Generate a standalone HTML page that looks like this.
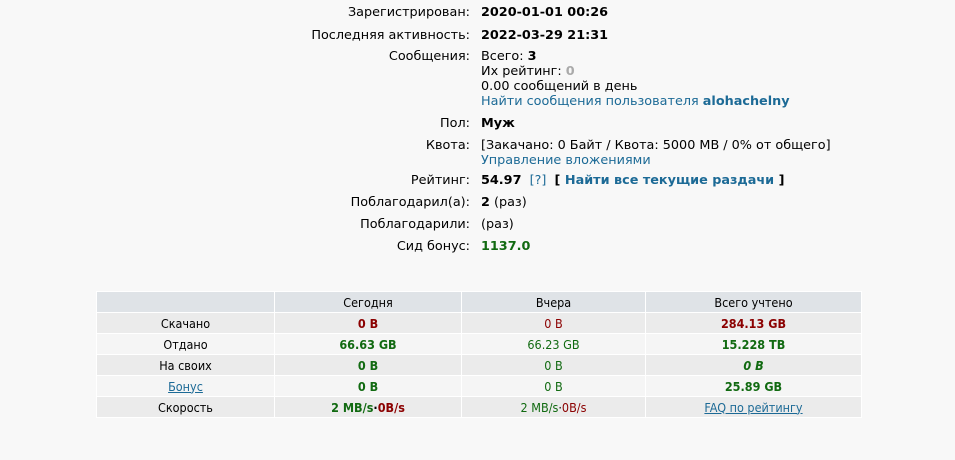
<!DOCTYPE html>
<html><head><meta charset="utf-8"><style>
body{margin:0;background:#f8f8f8;font-family:"DejaVu Sans",Verdana,sans-serif;font-size:12.8px;color:#000;width:955px;height:460px;overflow:hidden;position:relative}
.r{position:absolute;left:0;width:955px}
.l{position:absolute;right:485px;text-align:right;white-space:nowrap}
.v{position:absolute;left:481px;white-space:nowrap}
b{font-weight:bold}
a{color:#1c6a96;text-decoration:none}
.g{color:#116a11}
table{position:absolute;left:96px;top:291px;width:766px;border-collapse:collapse;border:1px solid #b0b0b0;font-family:"DejaVu Sans Condensed","DejaVu Sans",sans-serif;font-size:12.5px}
td{text-align:center;height:20px;padding:0;border:1px solid #fff}
tr.h td{background:#dfe3e7}
tr.o td{background:#ebebeb}
tr.e td{background:#f5f5f5}
.red{color:#8b0000}
.gr{color:#116a11}
td a{text-decoration:underline}
</style></head><body>
<div class="r" style="top:5px"><span class="l">Зарегистрирован:</span><span class="v"><b>2020-01-01 00:26</b></span></div>
<div class="r" style="top:28px"><span class="l">Последняя активность:</span><span class="v"><b>2022-03-29 21:31</b></span></div>
<div class="r" style="top:49px"><span class="l">Сообщения:</span><span class="v">Всего: <b>3</b></span></div>
<div class="r" style="top:64px"><span class="v">Их рейтинг: <b style="color:#aaa">0</b></span></div>
<div class="r" style="top:79px"><span class="v">0.00 сообщений в день</span></div>
<div class="r" style="top:94px"><span class="v"><a>Найти сообщения пользователя <b>alohachelny</b></a></span></div>
<div class="r" style="top:116px"><span class="l">Пол:</span><span class="v"><b>Муж</b></span></div>
<div class="r" style="top:138px"><span class="l">Квота:</span><span class="v">[Закачано: 0 Байт / Квота: 5000 MB / 0% от общего]</span></div>
<div class="r" style="top:153px"><span class="v"><a>Управление вложениями</a></span></div>
<div class="r" style="top:173px"><span class="l">Рейтинг:</span><span class="v"><b>54.97</b> &nbsp;<a>[?]</a> &nbsp;<b>[ <a>Найти все текущие раздачи</a> ]</b></span></div>
<div class="r" style="top:195px"><span class="l">Поблагодарил(а):</span><span class="v"><b>2</b> (раз)</span></div>
<div class="r" style="top:217px"><span class="l">Поблагодарили:</span><span class="v">(раз)</span></div>
<div class="r" style="top:239px"><span class="l">Сид бонус:</span><span class="v"><b class="g">1137.0</b></span></div>
<table>
<tr class="h"><td style="width:177px"></td><td style="width:186px">Сегодня</td><td style="width:183px">Вчера</td><td>Всего учтено</td></tr>
<tr class="o"><td>Скачано</td><td class="red"><b>0 B</b></td><td class="red">0 B</td><td class="red"><b>284.13 GB</b></td></tr>
<tr class="e"><td>Отдано</td><td class="gr"><b>66.63 GB</b></td><td class="gr">66.23 GB</td><td class="gr"><b>15.228 TB</b></td></tr>
<tr class="o"><td>На своих</td><td class="gr"><b>0 B</b></td><td class="gr">0 B</td><td class="gr"><b><i>0 B</i></b></td></tr>
<tr class="e"><td><a>Бонус</a></td><td class="gr"><b>0 B</b></td><td class="gr">0 B</td><td class="gr"><b>25.89 GB</b></td></tr>
<tr class="o"><td>Скорость</td><td><b><span class="gr">2 MB/s</span>·<span class="red">0B/s</span></b></td><td><span class="gr">2 MB/s</span>·<span class="red">0B/s</span></td><td><a>FAQ по рейтингу</a></td></tr>
</table>
</body></html>
